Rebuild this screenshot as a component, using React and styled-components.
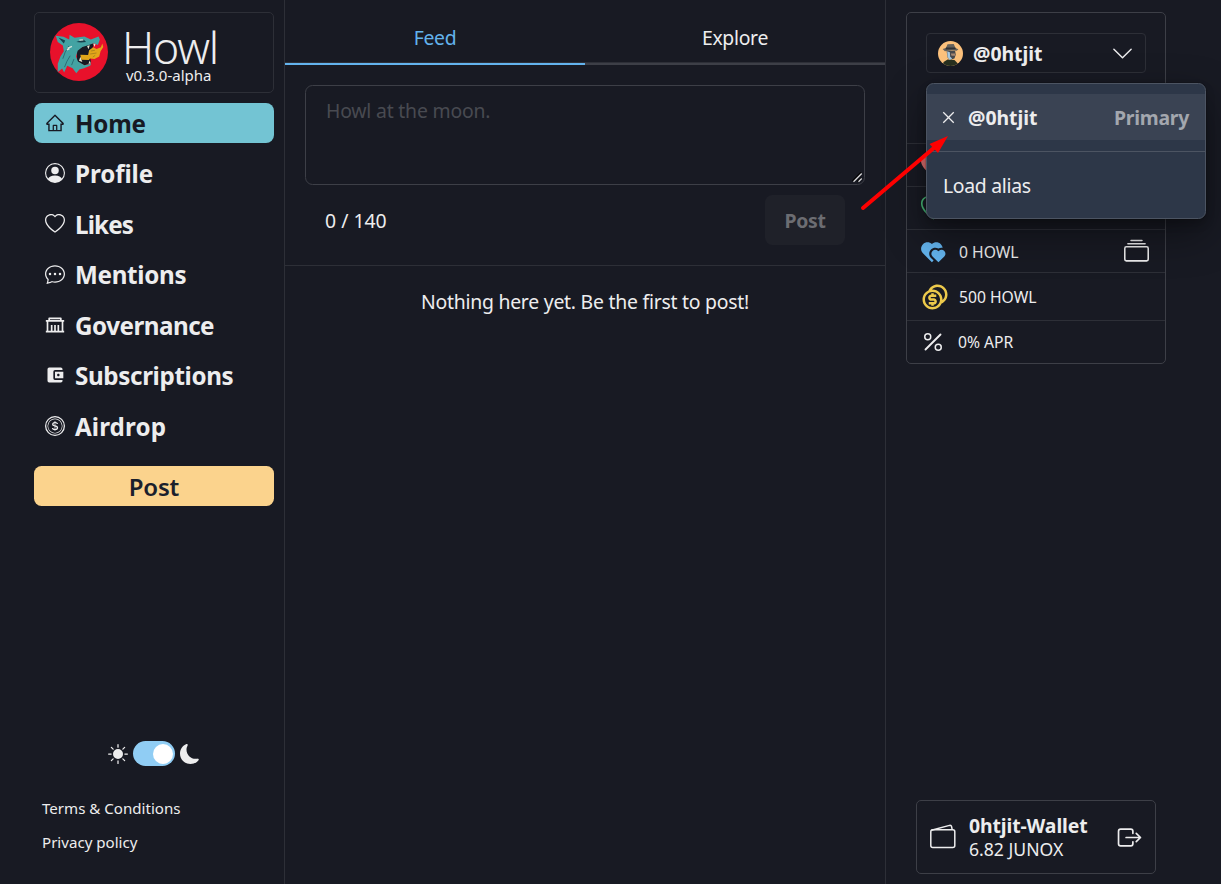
import React from "react";
import styled, { createGlobalStyle } from "styled-components";
import {
  BsPersonCircle, BsHeart, BsHeartFill, BsChatDots, BsCoin, BsPercent, BsCollection,
  BsChevronDown, BsFillSunFill, BsMoonFill,
} from "react-icons/bs";
import { RiGovernmentLine, RiHeartsFill, RiCoinsLine } from "react-icons/ri";
import { MdAccountBalanceWallet } from "react-icons/md";
import { AiOutlineHome } from "react-icons/ai";
import { VscClose } from "react-icons/vsc";
import { IoExitOutline } from "react-icons/io5";

const color = {
  bg: "#181a23",
  text: "#ededee",
  dark: "#1a202c",
  line: "#2d2f37",
  edge: "#3d3f47",
  blue: "#63b3ed",
};

const GlobalStyle = createGlobalStyle`
  *, *::before, *::after { box-sizing: border-box; }
  body {
    margin: 0;
    overflow: hidden;
    background: ${color.bg};
    color: ${color.text};
    font-family: "Noto Sans", "Open Sans", sans-serif;
    font-size: 19.4px;
  }
  button { font: inherit; color: inherit; background: none; border: 0; padding: 0; }
  svg { display: block; flex: none; }
`;

const Page = styled.div`
  position: relative;
  display: flex;
  height: 884px;
`;

/* ---------- Sidebar ---------- */
const Sidebar = styled.aside`
  display: flex;
  flex-direction: column;
  width: 285px;
  padding: 12px 10px 25px 34px;
  border-right: 1px solid ${color.line};
`;

const Brand = styled.header`
  display: flex;
  align-items: center;
  gap: 17px;
  height: 81px;
  padding: 0 0 2px 15px;
  border: 1px solid ${color.line};
  border-radius: 5px;
`;

const BrandText = styled.div`
  display: flex;
  flex-direction: column;
  padding-top: 5px;
`;

const BrandName = styled.span`
  margin-left: -3px;
  font-size: 44.5px;
  font-weight: 300;
  line-height: 44px;
  letter-spacing: -1.2px;
`;

const Version = styled.span`
  padding-left: 1px;
  font-size: 15px;
  line-height: 16px;
  margin-top: -2px;
`;

const Nav = styled.nav`
  display: flex;
  flex-direction: column;
  gap: 10.5px;
  margin-top: 10px;
`;

const NavItem = styled.a`
  display: flex;
  align-items: center;
  gap: 10px;
  height: 40px;
  padding-left: 11px;
  border-radius: 8px;
  font-size: 24.2px;
  font-weight: 700;
  letter-spacing: ${(p) => p.$tracking || 0}px;
  color: ${(p) => (p.$active ? "#171923" : color.text)};
  background: ${(p) => (p.$active ? "#73c4d3" : "transparent")};
  &:nth-child(even) svg { margin-bottom: 2px; }
`;

const PostButton = styled.button`
  height: 40px;
  margin-top: 20px;
  border-radius: 7.5px;
  background: #fbd38d;
  color: ${color.dark};
  font-size: 24px;
  font-weight: 600;
  letter-spacing: -0.2px;
`;

const ThemeSwitch = styled.div`
  display: flex;
  align-items: center;
  justify-content: center;
  gap: 5px;
  margin-top: auto;
`;

const Track = styled.span`
  display: flex;
  justify-content: flex-end;
  width: 42px;
  height: 25px;
  padding: 2.5px;
  border-radius: 13px;
  background: #90cdf4;
`;

const Knob = styled.span`
  width: 20px;
  height: 20px;
  border-radius: 50%;
  background: #fff;
`;

const Legal = styled.div`
  display: flex;
  flex-direction: column;
  margin-top: 25px;
  padding-left: 8px;
  font-size: 15.1px;
  line-height: 34px;
`;

/* ---------- Feed ---------- */
const Main = styled.main`
  width: 601px;
  border-right: 1px solid ${color.line};
`;

const Tabs = styled.div`
  display: flex;
  height: 65px;
`;

const Tab = styled.button`
  flex: 1;
  padding-top: 12px;
  border-bottom: 2px solid ${(p) => (p.$active ? color.blue : color.edge)};
  box-shadow: inset 0 -1px ${color.line};
  color: ${(p) => (p.$active ? color.blue : color.text)};
  letter-spacing: -0.3px;
`;

const Composer = styled.form`
  padding: 20px 20px 20px;
  border-bottom: 1px solid ${color.line};
`;

const DraftBox = styled.div`
  position: relative;
  height: 100px;
`;

const Draft = styled.textarea`
  display: block;
  width: 560px;
  height: 100px;
  padding: 10px 20px;
  border: 1px solid ${color.edge};
  border-radius: 7.5px;
  background: transparent;
  color: ${color.text};
  font: inherit;
  line-height: 30px;
  outline: 0;
  resize: none;
  &::placeholder { color: #484a51; letter-spacing: -0.2px; }
`;

const Grip = styled.svg`
  position: absolute;
  right: 2px;
  bottom: 2px;
`;

const ComposerFooter = styled.div`
  display: flex;
  align-items: center;
  justify-content: space-between;
  margin-top: 10px;
  padding: 0 20px;
`;

const SubmitButton = styled.button`
  width: 80px;
  height: 50px;
  border-radius: 7.5px;
  background: #1f2129;
  color: #6c6d72;
  font-weight: 700;
  letter-spacing: -0.3px;
`;

const EmptyNote = styled.p`
  margin: 0;
  padding-top: 21px;
  text-align: center;
  line-height: 30px;
  letter-spacing: -0.24px;
`;

/* ---------- Account column ---------- */
const Side = styled.aside`
  display: flex;
  flex-direction: column;
  justify-content: space-between;
  padding: 12px 0 10px 20px;
`;

const AccountCard = styled.section`
  position: relative;
  width: 260px;
  height: 352px;
  border: 1px solid ${color.edge};
  border-radius: 5px;
`;

const AliasArea = styled.div`
  height: 130px;
  padding: 20px 19px 0;
`;

const AliasSelect = styled.button`
  display: flex;
  align-items: center;
  width: 220px;
  height: 40px;
  padding: 0 11px;
  border: 1px solid ${color.line};
  border-radius: 4px;
  font-weight: 700;
  svg:first-child { margin-right: 10px; }
  svg:last-child { margin-left: auto; }
`;

const StatRow = styled.div`
  display: flex;
  align-items: center;
  height: ${(p) => p.$height || 43}px;
  padding: ${(p) => p.$drop || 0}px 16px 0 11px;
  font-size: 15.7px;
  border-top: 1px solid ${color.line};
`;

const StatIcon = styled.span`
  display: flex;
  justify-content: center;
  width: ${(p) => p.$width || 30}px;
  padding-left: ${(p) => p.$shift || 0}px;
  margin-right: 11px;
  color: ${(p) => p.$color};
`;

const StatAction = styled.span`
  margin-left: auto;
  padding-bottom: 2px;
`;

const Menu = styled.div`
  position: absolute;
  top: 70px;
  left: 19px;
  width: 280px;
  height: 136px;
  padding-top: 10px;
  border: 1px solid #4c5462;
  border-radius: 7.5px;
  background: #2d3748;
  box-shadow: rgba(0, 0, 0, 0.1) 0 0 0 1px, rgba(0, 0, 0, 0.2) 0 5px 10px,
    rgba(0, 0, 0, 0.4) 0 15px 40px;
`;

const MenuItem = styled.div`
  display: flex;
  align-items: center;
  height: 46px;
  padding: 0 16px 0 ${(p) => (p.$active ? 11 : 16)}px;
  background: ${(p) => (p.$active ? "#3a4353" : "transparent")};
  font-weight: ${(p) => (p.$active ? 700 : 400)};
  letter-spacing: ${(p) => (p.$active ? 0 : -0.3)}px;
  svg { margin-right: 9px; }
`;

const Badge = styled.span`
  margin-left: auto;
  color: #a3a7ae;
  letter-spacing: -0.25px;
`;

const MenuDivider = styled.hr`
  height: 1px;
  margin: 11px 0 10px;
  border: 0;
  background: #4c5462;
`;

const WalletCard = styled.section`
  display: flex;
  align-items: center;
  width: 240px;
  height: 74px;
  margin-left: 10px;
  padding: 0 12px 0 13px;
  border: 1px solid ${color.edge};
  border-radius: 5px;
  svg:first-child { margin-bottom: 2px; }
`;

const WalletText = styled.div`
  display: flex;
  flex-direction: column;
  margin: 0 auto 0 13px;
  font-size: 17.6px;
  line-height: 23px;
`;

const WalletName = styled.strong`
  font-size: 19.4px;
  line-height: 24px;
  letter-spacing: -0.1px;
`;

const Pointer = styled.svg`
  position: absolute;
  left: 855px;
  top: 130px;
`;

const WolfLogo = () => (
  <svg width="58" height="58" viewBox="20 27 172 172">
    <circle cx="106" cy="113" r="86" fill="#e8112b" />
    <path d="M100 106L126 92 150 86 146 104 138 122 142 146 122 152 100 142Z" fill="#171923" />
    <path d="M37 65L60 68 77 76 78 62 93 71 122 67 141 76 164 67 168 76 162 92 149 87 133 93 116 98 102 109 97 126 103 141 122 152 142 148 139 154 121 161 107 165 98 176 87 161 71 154 62 174 56 162 43 172 43 148 51 126 61 111 58 94 43 83Z" fill="#43a3a3" />
    <path d="M45 70L65 79 61 88ZM98 83L119 75 127 83 112 85Z" fill="#173e4b" />
    <path d="M76 95Q63 113 58 133M80 124Q69 140 63 158M91 134L84 152" fill="none" stroke="#1f5560" strokeWidth="2" />
    <path d="M107 78L119 77M72 102L85 96M70 107L78 103" stroke="#d7e5da" strokeWidth="4" />
    <path d="M130 95L134 105 138 93M148 88L152 98 155 89M106 139L110 127 116 143M134 148L138 138 141 147" fill="#e8e6d2" />
    <path d="M110 121L133 122 136 108 148 99 158 104 171 99 175 88 178 98 170 111 166 126 152 134 139 132 135 137 113 136Z" fill="#e2a619" />
    <path d="M141 110L153 108M139 119L158 116M147 128L154 123" stroke="#9a741a" strokeWidth="2" />
  </svg>
);

const Avatar = () => (
  <svg width="25" height="25" viewBox="18 13 76 76">
    <clipPath id="avatar-clip"><circle cx="56" cy="51" r="38" /></clipPath>
    <circle cx="56" cy="51" r="38" fill="#fcc17c" />
    <g clipPath="url(#avatar-clip)">
      <path d="M31 92L35 77 47 69 68 71 79 82 81 92Z" fill="#28301f" />
      <path d="M44 42L70 43 72 55 68 66 55 70 47 63Z" fill="#48484c" />
      <path d="M46 44L54 47 55 61 61 66 54 71 47 62Z" fill="#a8c8de" />
      <path d="M57 51H70V58H59Z" fill="#a88872" />
      <path d="M32 37L42 34 47 23 66 22 71 34 80 38 75 43 60 41 39 44Z" fill="#66625c" />
      <path d="M42 33L71 33 72 38 41 39Z" fill="#303134" />
    </g>
  </svg>
);

const WalletOutline = () => (
  <svg width="26" height="25" viewBox="0 0 26 25" fill="none" stroke="currentColor" strokeWidth="1.5" strokeLinejoin="round">
    <rect x="0.8" y="5.8" width="24" height="17.6" rx="2" />
    <path d="M1.4 6.2L19.5 1.4Q21.2 1.1 21.6 2.6L22.2 5.8" />
  </svg>
);

const links = [
  { label: "Home", Icon: AiOutlineHome, active: true, tracking: -0.2 },
  { label: "Profile", Icon: BsPersonCircle, tracking: -0.1 },
  { label: "Likes", Icon: BsHeart, tracking: -0.85 },
  { label: "Mentions", Icon: BsChatDots, tracking: -0.3 },
  { label: "Governance", Icon: RiGovernmentLine, tracking: -0.5 },
  { label: "Subscriptions", Icon: MdAccountBalanceWallet, tracking: -0.36 },
  { label: "Airdrop", Icon: BsCoin, tracking: 0.1 },
];

export default function App() {
  return (
    <Page>
      <GlobalStyle />
      <Sidebar>
        <Brand>
          <WolfLogo />
          <BrandText>
            <BrandName>Howl</BrandName>
            <Version>v0.3.0-alpha</Version>
          </BrandText>
        </Brand>
        <Nav>
          {links.map(({ label, Icon, active, tracking }) => (
            <NavItem key={label} $active={active} $tracking={tracking}>
              <Icon size={20} />
              {label}
            </NavItem>
          ))}
        </Nav>
        <PostButton>Post</PostButton>
        <ThemeSwitch>
          <BsFillSunFill size={20} />
          <Track><Knob /></Track>
          <BsMoonFill size={20} />
        </ThemeSwitch>
        <Legal>
          <span>Terms &amp; Conditions</span>
          <span>Privacy policy</span>
        </Legal>
      </Sidebar>

      <Main>
        <Tabs>
          <Tab $active>Feed</Tab>
          <Tab>Explore</Tab>
        </Tabs>
        <Composer>
          <DraftBox>
            <Draft placeholder="Howl at the moon." />
            <Grip width="11" height="11" viewBox="0 0 11 11" fill="none">
              <path d="M0.5 9L9 0.5M5.5 9.5L9 6" stroke="#000" strokeWidth="1.5" />
              <path d="M1.5 9.7L9.7 1.5M6.5 9.7L9.7 6.5" stroke="#d8d8da" strokeWidth="1.3" />
            </Grip>
          </DraftBox>
          <ComposerFooter>
            <span>0 / 140</span>
            <SubmitButton type="button" disabled>Post</SubmitButton>
          </ComposerFooter>
        </Composer>
        <EmptyNote>Nothing here yet. Be the first to post!</EmptyNote>
      </Main>

      <Side>
        <AccountCard>
          <AliasArea>
            <AliasSelect>
              <Avatar />
              @0htjit
              <BsChevronDown size={23} />
            </AliasSelect>
          </AliasArea>
          <StatRow><StatIcon $color="#e57373"><BsHeartFill size={25} /></StatIcon></StatRow>
          <StatRow><StatIcon $color="#48bb78"><BsHeart size={25} /></StatIcon></StatRow>
          <StatRow $drop={2}>
            <StatIcon $color={color.blue}><RiHeartsFill size={26} /></StatIcon>
            0 HOWL
            <StatAction><BsCollection size={25} /></StatAction>
          </StatRow>
          <StatRow $height={48}>
            <StatIcon $color="#ecc94b" $shift={3}><RiCoinsLine size={30} /></StatIcon>
            500 HOWL
          </StatRow>
          <StatRow $height={43}>
            <StatIcon $width={29}><BsPercent size={24} /></StatIcon>
            0% APR
          </StatRow>
          <Menu>
            <MenuItem $active>
              <VscClose size={21} />
              @0htjit
              <Badge>Primary</Badge>
            </MenuItem>
            <MenuDivider />
            <MenuItem>Load alias</MenuItem>
          </Menu>
        </AccountCard>

        <WalletCard>
          <WalletOutline />
          <WalletText>
            <WalletName>0htjit-Wallet</WalletName>
            6.82 JUNOX
          </WalletText>
          <IoExitOutline size={27} />
        </WalletCard>
      </Side>

      <Pointer width="100" height="85" viewBox="0 0 100 85">
        <path d="M8 78L80 17" stroke="#fe0000" strokeWidth="4" strokeLinecap="round" />
        <path d="M93 6L74.5 14 83 23Z" fill="#fe0000" />
      </Pointer>
    </Page>
  );
}
